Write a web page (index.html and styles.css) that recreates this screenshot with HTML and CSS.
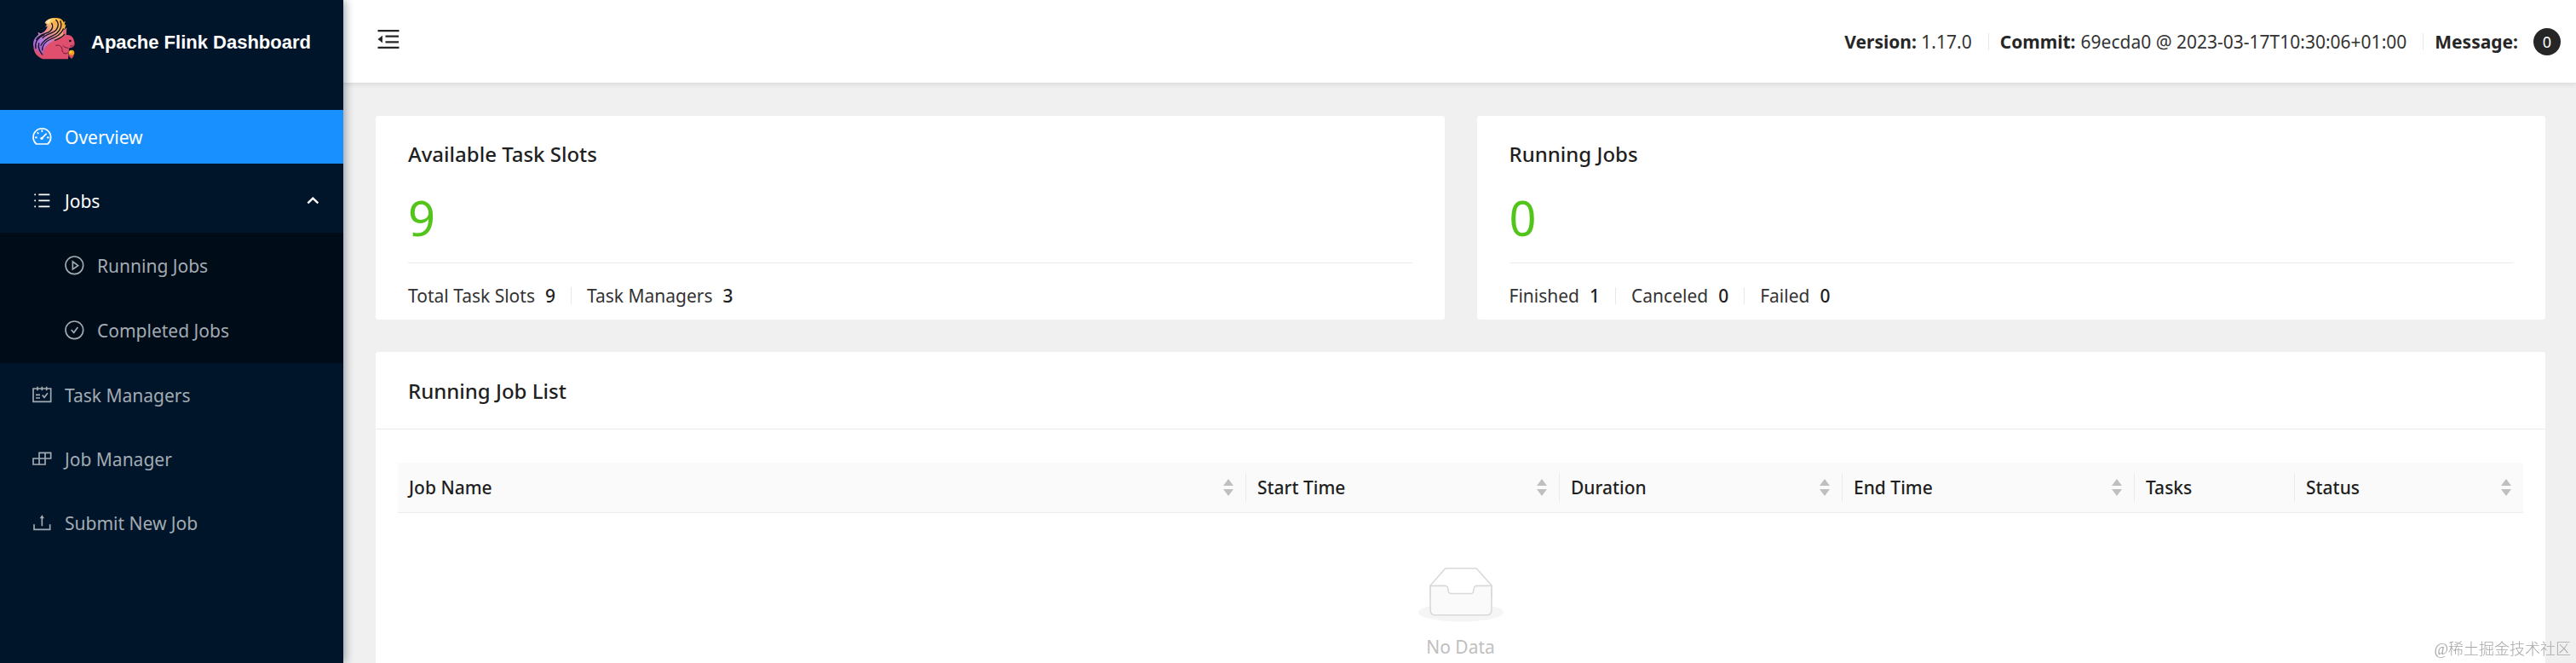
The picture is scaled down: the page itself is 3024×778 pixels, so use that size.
FILE: index.html
```html
<!DOCTYPE html>
<html lang="en">
<head>
<meta charset="utf-8">
<title>Apache Flink Web Dashboard</title>
<link rel="stylesheet" href="styles.css">
</head>
<body>
<div class="shell">
  <aside class="sidebar">
    <a class="brand" href="#">
      <svg class="brand-logo" viewBox="0 0 150 150" aria-hidden="true">
        <defs>
          <linearGradient id="tail" x1="0.75" y1="0" x2="0.2" y2="1">
            <stop offset="0" stop-color="#f9a825"/>
            <stop offset="0.22" stop-color="#f5b46a"/>
            <stop offset="0.42" stop-color="#e58a94"/>
            <stop offset="0.62" stop-color="#b47be0"/>
            <stop offset="0.8" stop-color="#a866d6"/>
            <stop offset="1" stop-color="#dc4a6c"/>
          </linearGradient>
        </defs>
        <path fill="url(#tail)" d="M44 20c6-13 22-18 42-17 14 1 22 8 24 15l6-4-3 14 5-2c-2 12-6 18-10 22l12-8-3 24c-10 14-26 26-42 32l-30 50C26 142 8 128 4 104 0 84 10 70 22 62l-3-9 10 5c12-4 22-14 24-26l-8 3 6-8z"/>
        <path fill="#ffc95c" d="M47 19c8-12 22-16 38-14 12 2 20 8 22 16-8-7-18-10-28-8-8 2-14 7-18 14-3-5-8-8-14-8z"/>
        <path fill="#fbe3bd" d="M46 19c7-9 18-12 26-12-8 4-14 10-15 18-3-4-7-6-11-6z"/>
        <g fill="none" stroke="#161426" stroke-width="4" stroke-linecap="round">
          <path d="M83 10c10 8 10 22 2 34C76 58 50 58 36 74"/>
          <path d="M99 14c6 14 0 30-12 42C72 70 44 70 30 100"/>
          <path d="M68 22c6 8 4 20-6 28C50 60 24 60 14 80"/>
          <path d="M42 62C20 72 8 88 12 110"/>
          <path d="M23 92c-4 14 2 34 22 50"/>
        </g>
        <path fill="#e0506e" d="M38 148C20 142 6 130 4 106c8 16 20 26 34 28 0-30 18-44 46-54 12-5 20-16 38-17 14 0 22 8 24 18 3 8 4 14 1 20-5 6-12 7-19 9 8 10 6 28-2 38z"/>
        <path fill="#e0687a" d="M108 50l13-13-2 28-12 2z"/>
        <g fill="none" stroke="#161426" stroke-width="4" stroke-linecap="round">
          <path d="M109 42C102 62 82 70 64 78c-16 7-29 18-29 38"/>
          <path d="M113 61c-10 12-22 16-34 21"/>
        </g>
        <g fill="none" stroke="#6a1c40" stroke-width="3" stroke-linecap="round">
          <path d="M83 100c12-4 22 4 22 16 0 6 3 11 9 12"/>
          <path d="M108 101c6 6 12 8 18 8"/>
          <path d="M134 102c4 1 8 0 10-3"/>
          <path d="M113 128c6 1 10 0 12-2"/>
        </g>
        <path fill="#001529" d="M129 112h20v36h-23z"/>
        <circle cx="133" cy="84" r="4" fill="#111"/>
        <circle cx="138" cy="126" r="10" fill="#f6a21c"/>
        <circle cx="135" cy="123" r="4" fill="#ffd34d"/>
        <path fill="#d84a66" d="M126 133l20 2c-1 6-6 9-9 12-3-5-8-8-11-14z"/>
      </svg>
      <span class="brand-name">Apache Flink Dashboard</span>
    </a>
    <nav class="menu">
      <a class="item item-active" href="#">
        <svg class="icon" viewBox="0 0 75 75"><path d="M17 63A31 31 0 1 1 57 63Z"/><path d="M37 13v8M12 40h8M54 40h8M20 22l5 5M36 43l17-17"/><circle class="solid" cx="36" cy="43" r="5"/></svg>
        <span>Overview</span>
      </a>
      <button class="item item-open" type="button" aria-expanded="true">
        <svg class="icon" viewBox="0 0 75 75"><path d="M25 16h39M25 37h39M25 58h39"/><path d="M10 16h5M10 37h5M10 58h5"/></svg>
        <span>Jobs</span>
        <svg class="icon chevron" viewBox="0 0 75 75"><path d="M19 46l18-17 18 17"/></svg>
      </button>
      <div class="submenu">
        <a class="item" href="#">
          <svg class="icon" viewBox="0 0 75 75"><circle cx="37" cy="37" r="31"/><path d="M31 24v27l19-13z"/></svg>
          <span>Running Jobs</span>
        </a>
        <a class="item" href="#">
          <svg class="icon" viewBox="0 0 75 75"><circle cx="37" cy="37" r="31"/><path d="M26 36l9 10 14-19"/></svg>
          <span>Completed Jobs</span>
        </a>
      </div>
      <a class="item" href="#">
        <svg class="icon" viewBox="0 0 75 75"><path d="M6 15h62v46H6z"/><path d="M21 8v14M37 8v14M53 8v14M15 37h15M15 48h15M38 38l7 8 12-15"/></svg>
        <span>Task Managers</span>
      </a>
      <a class="item" href="#">
        <svg class="icon" viewBox="0 0 75 75"><path d="M27 16h41v20H27zM6 36h42v21H6zM48 16v20M27 36v21"/></svg>
        <span>Job Manager</span>
      </a>
      <a class="item" href="#">
        <svg class="icon" viewBox="0 0 75 75"><path d="M37 16v33M9 43v18h56V43"/><path class="solid" d="M37 10l8 12H29z"/></svg>
        <span>Submit New Job</span>
      </a>
    </nav>
  </aside>

  <div class="page">
    <header class="topbar">
      <button class="fold" type="button" aria-label="Collapse menu">
        <svg class="fold-icon" viewBox="0 0 1024 1024"><path d="M400 370h496v72H400zM400 582h496v72H400zM112 160h800v72H112zM112 792h800v72H112zM112 512l174-138v276z"/></svg>
      </button>
      <div class="facts">
        <span class="fact"><strong>Version:</strong> 1.17.0</span>
        <span class="fact"><strong>Commit:</strong> 69ecda0 @ 2023-03-17T10:30:06+01:00</span>
        <span class="fact"><strong>Message:</strong> <span class="badge">0</span></span>
      </div>
    </header>

    <main class="content">
      <div class="stats">
        <section class="card stat">
          <h2 class="title">Available Task Slots</h2>
          <p class="total">9</p>
          <div class="details">
            <span class="detail">Total Task Slots <b>9</b></span>
            <span class="detail">Task Managers <b>3</b></span>
          </div>
        </section>
        <section class="card stat">
          <h2 class="title">Running Jobs</h2>
          <p class="total">0</p>
          <div class="details">
            <span class="detail">Finished <b>1</b></span>
            <span class="detail">Canceled <b>0</b></span>
            <span class="detail">Failed <b>0</b></span>
          </div>
        </section>
      </div>

      <section class="card list">
        <h2 class="title list-title">Running Job List</h2>
        <div class="list-body">
          <table class="jobs">
            <colgroup><col><col class="c-start"><col class="c-duration"><col class="c-end"><col class="c-tasks"><col class="c-status"></colgroup>
            <thead>
              <tr>
                <th><button class="sort" type="button">Job Name <svg class="sorter" viewBox="0 0 12 20"><path d="M6 0l6 8H0zM6 20l6-8H0z"/></svg></button></th>
                <th><button class="sort" type="button">Start Time <svg class="sorter" viewBox="0 0 12 20"><path d="M6 0l6 8H0zM6 20l6-8H0z"/></svg></button></th>
                <th><button class="sort" type="button">Duration <svg class="sorter" viewBox="0 0 12 20"><path d="M6 0l6 8H0zM6 20l6-8H0z"/></svg></button></th>
                <th><button class="sort" type="button">End Time <svg class="sorter" viewBox="0 0 12 20"><path d="M6 0l6 8H0zM6 20l6-8H0z"/></svg></button></th>
                <th><span class="sort">Tasks</span></th>
                <th><button class="sort" type="button">Status <svg class="sorter" viewBox="0 0 12 20"><path d="M6 0l6 8H0zM6 20l6-8H0z"/></svg></button></th>
              </tr>
            </thead>
            <tbody>
              <tr>
                <td colspan="6">
                  <div class="empty">
                    <svg class="empty-icon" viewBox="0 0 64 41"><g transform="translate(0 1)" fill="none" fill-rule="evenodd"><ellipse fill="#f5f5f5" cx="32" cy="33" rx="32" ry="7"/><g fill-rule="nonzero" stroke="#d9d9d9"><path d="M55 12.760L44.854 1.258C44.367.474 43.656 0 42.907 0H21.093c-.749 0-1.460.474-1.947 1.257L9 12.761V22h46v-9.240z"/><path d="M41.613 15.931c0-1.605.994-2.930 2.227-2.931H55v18.137C55 33.260 53.680 35 52.050 35h-40.100C10.320 35 9 33.259 9 31.137V13h11.160c1.233 0 2.227 1.323 2.227 2.928v.022c0 1.605 1.005 2.901 2.237 2.901h14.752c1.232 0 2.237-1.308 2.237-2.913v-.007z" fill="#fafafa"/></g></g></svg>
                    <span>No Data</span>
                  </div>
                </td>
              </tr>
            </tbody>
          </table>
        </div>
      </section>
    </main>
  </div>
  <div class="watermark">@稀土掘金技术社区</div>
</div>
</body>
</html>
```

FILE: styles.css
```css
* {
  box-sizing: border-box;
}

body {
  margin: 0;
  background: #f0f0f0;
  color: #333;
  font: 400 21px/34px "Noto Sans", "Open Sans", sans-serif;
}

button {
  border: 0;
  background: none;
  color: inherit;
  font: inherit;
  text-align: left;
  cursor: pointer;
}

a {
  color: inherit;
  text-decoration: none;
}

.shell {
  display: flex;
  height: 100vh;
  overflow: hidden;
}

/* Sidebar */
.sidebar {
  flex: none;
  z-index: 1;
  width: 403px;
  background: #001529;
  box-shadow: 2px 0 10px rgba(0, 21, 41, 0.4);
  color: #a2abb3;
}

.brand {
  display: flex;
  align-items: center;
  gap: 19px;
  height: 97px;
  margin-bottom: 32px;
  padding: 0 38px 8px;
  color: #fff;
  font: 700 22px/34px "Liberation Sans", sans-serif;
  white-space: nowrap;
}

.brand-logo {
  flex: none;
  width: 50px;
  height: 50px;
}

.brand-name {
  padding-top: 10px;
}

.menu {
  display: flex;
  flex-direction: column;
  gap: 12px;
}

.item {
  display: flex;
  align-items: center;
  gap: 14px;
  width: 100%;
  height: 63px;
  padding: 0 23px 0 37px;
}

.item-active {
  background: #1890ff;
  color: #fff;
}

.item-open {
  color: #fff;
}

.icon {
  flex: none;
  width: 25px;
  height: 25px;
  fill: none;
  stroke: currentColor;
  stroke-width: 5;
}

.icon .solid {
  fill: currentColor;
  stroke: none;
}

.chevron {
  margin-left: auto;
  stroke-width: 7;
}

.submenu {
  display: flex;
  flex-direction: column;
  gap: 13px;
  margin: -6px 0;
  padding: 7px 0;
  background: #000c17;
}

.submenu .item {
  padding-left: 75px;
}

/* Top bar */
.page {
  flex: 1;
  min-width: 0;
}

.topbar {
  display: flex;
  align-items: center;
  justify-content: space-between;
  height: 97px;
  padding: 0 18px 0 37px;
  background: #fff;
  box-shadow: 0 2px 6px rgba(0, 21, 41, 0.1);
}

.fold {
  display: flex;
  padding: 0 0 5px;
}

.fold-icon {
  width: 32px;
  height: 32px;
  fill: #262626;
}

.facts {
  display: flex;
  align-items: center;
}

.facts strong {
  color: #262626;
}

.fact + .fact {
  display: flex;
  align-items: center;
  gap: 6px;
}

.fact + .fact::before {
  width: 1px;
  height: 20px;
  margin: 0 7px 0 19px;
  background: #e8e8e8;
  content: "";
}

.badge {
  display: flex;
  align-items: center;
  justify-content: center;
  width: 32px;
  height: 32px;
  margin-left: 12px;
  border-radius: 50%;
  background: #262626;
  color: #fff;
  font-size: 18px;
}

/* Cards */
.content {
  padding: 39px 36px 38px 38px;
}

.card {
  border-radius: 3px;
  background: #fff;
}

.title {
  margin: 0;
  color: #1f1f1f;
  font-size: 24px;
  font-weight: 500;
  line-height: 38px;
}

.stats {
  display: grid;
  grid-template-columns: 1fr 1fr;
  gap: 38px;
  margin-bottom: 38px;
}

.stat {
  padding: 26px 38px 11px;
}

.total {
  margin: 0;
  padding: 18px 0 16px;
  border-bottom: 1px solid #ebebeb;
  color: #52c41a;
  font-size: 56px;
  line-height: 74px;
}

.details {
  display: flex;
  padding-top: 21px;
}

.detail {
  display: flex;
  align-items: center;
}

.detail b {
  margin-left: 12px;
  color: #1f1f1f;
  font-weight: 500;
}

.detail + .detail::before {
  width: 1px;
  height: 20px;
  margin: 0 18px;
  background: #e8e8e8;
  content: "";
}

/* Job table */
.list-title {
  padding: 27px 38px 25px;
  border-bottom: 1px solid #ebebeb;
}

.list-body {
  padding: 39px 26px 38px;
}

.jobs {
  width: 100%;
  border-collapse: collapse;
  table-layout: fixed;
}

.c-start { width: 368px; }
.c-duration { width: 332px; }
.c-end { width: 343px; }
.c-tasks { width: 188px; }
.c-status { width: 268px; }

.jobs th {
  padding: 12px 0;
  border-bottom: 1px solid #ebebeb;
  background: #fafafa;
  color: #1f1f1f;
  font-weight: 500;
}

.sort {
  display: flex;
  align-items: center;
  justify-content: space-between;
  width: 100%;
  height: 34px;
  padding: 0 14px 0 13px;
  border-right: 1px solid #ebebeb;
}

.jobs th:last-child .sort {
  border-right: 0;
}

.sorter {
  width: 12px;
  height: 20px;
  fill: #bfbfbf;
}

.jobs td {
  padding: 63px 0 38px;
}

.empty {
  display: flex;
  flex-direction: column;
  align-items: center;
  gap: 12px;
  color: #bfbfbf;
}

.empty-icon {
  width: 100px;
  height: 65px;
}

.watermark {
  position: fixed;
  right: 6px;
  bottom: 3px;
  z-index: 2;
  color: #a6a6a6;
  font: 300 18px/26px "Liberation Serif", "Noto Sans CJK SC", sans-serif;
}
```
